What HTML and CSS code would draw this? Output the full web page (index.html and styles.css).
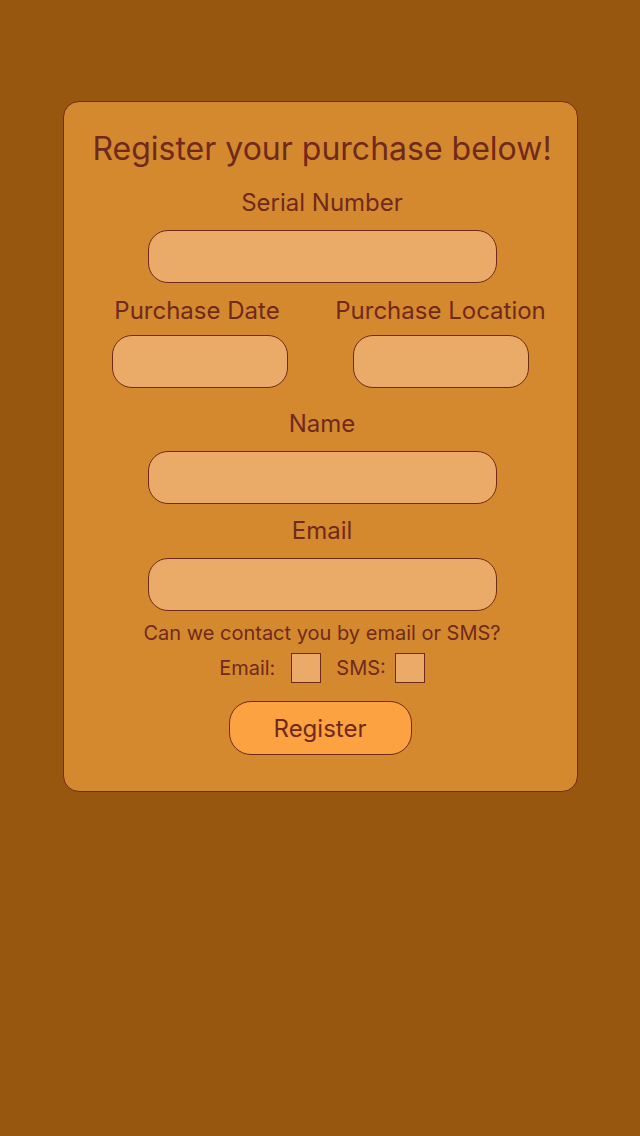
FILE: index.html
```html
<!DOCTYPE html>
<html lang="en">
<head>
<meta charset="utf-8">
<title>Register your purchase</title>
<link rel="stylesheet" href="styles.css">
</head>
<body>
<form class="card">
  <h1 class="title">Register your purchase below!</h1>
  <label class="label label-serial" for="serial">Serial Number</label>
  <input class="field field-wide" id="serial" type="text">
  <div class="pair">
    <div class="col">
      <label class="label label-date" for="pdate">Purchase Date</label>
      <input class="field field-half" id="pdate" type="text">
    </div>
    <div class="col">
      <label class="label" for="ploc">Purchase Location</label>
      <input class="field field-half" id="ploc" type="text">
    </div>
  </div>
  <label class="label label-name" for="name">Name</label>
  <input class="field field-wide" id="name" type="text">
  <label class="label label-email" for="email">Email</label>
  <input class="field field-wide" id="email" type="text">
  <p class="question">Can we contact you by email or SMS?</p>
  <div class="checks">
    <label class="check-label" for="cemail">Email:</label>
    <input class="box box-email" id="cemail" type="checkbox">
    <label class="check-label check-sms" for="csms">SMS:</label>
    <input class="box" id="csms" type="checkbox">
  </div>
  <button class="submit" type="button">Register</button>
</form>
</body>
</html>
```
FILE: styles.css
```css
html, body {
  margin: 0;
  padding: 0;
}
body {
  background: #98570e;
  font-family: Inter, "Noto Sans", sans-serif;
  color: #6f2a1b;
  min-height: 1136px;
}
.card {
  box-sizing: border-box;
  width: 515px;
  margin: 101px auto 0;
  padding: 27px 0 36px 4px;
  background: #d5892f;
  border: 1px solid #6f2a1b;
  border-radius: 16px;
  display: flex;
  flex-direction: column;
  align-items: center;
}
.title {
  margin: 0;
  font-size: 32px;
  font-weight: 400;
  line-height: 40px;
}
.label {
  font-size: 24px;
  line-height: 28px;
}
.label-serial { margin-top: 20px; }
.label-name { margin-top: 22px; }
.label-email { margin-top: 13px; }
.label-date { margin-right: 5px; }
.field {
  box-sizing: border-box;
  height: 53px;
  margin: 13px 0 0;
  background: #e9ab67;
  border: 1px solid #6f2a1b;
  border-radius: 20px;
  font: inherit;
  outline: none;
}
.field-wide { width: 349px; }
.field-half { width: 176px; margin-top: 10px; }
.pair {
  align-self: stretch;
  display: grid;
  grid-template-columns: 220px 220px;
  column-gap: 21px;
  padding-left: 22px;
  margin-top: 14px;
}
.col {
  display: flex;
  flex-direction: column;
  align-items: center;
}
.question {
  margin: 10px 0 0;
  font-size: 20px;
  line-height: 24px;
}
.checks {
  display: flex;
  align-items: center;
  margin-top: 8px;
  height: 30px;
}
.check-label {
  font-size: 20px;
  line-height: 24px;
  margin-right: 16px;
}
.box {
  appearance: none;
  -webkit-appearance: none;
  box-sizing: border-box;
  width: 30px;
  height: 30px;
  margin: 0;
  background: #e9ab67;
  border: 1px solid #6f2a1b;
  border-radius: 0;
}
.checks .box-email { margin-right: 15px; }
.checks .check-sms { margin-right: 9px; }
.submit {
  box-sizing: border-box;
  width: 183px;
  height: 54px;
  margin-top: 18px;
  margin-left: -4px;
  background: #fca240;
  border: 1px solid #6f2a1b;
  border-radius: 22px;
  font-family: Inter, "Noto Sans", sans-serif;
  font-size: 24px;
  color: #6f2a1b;
}
```
